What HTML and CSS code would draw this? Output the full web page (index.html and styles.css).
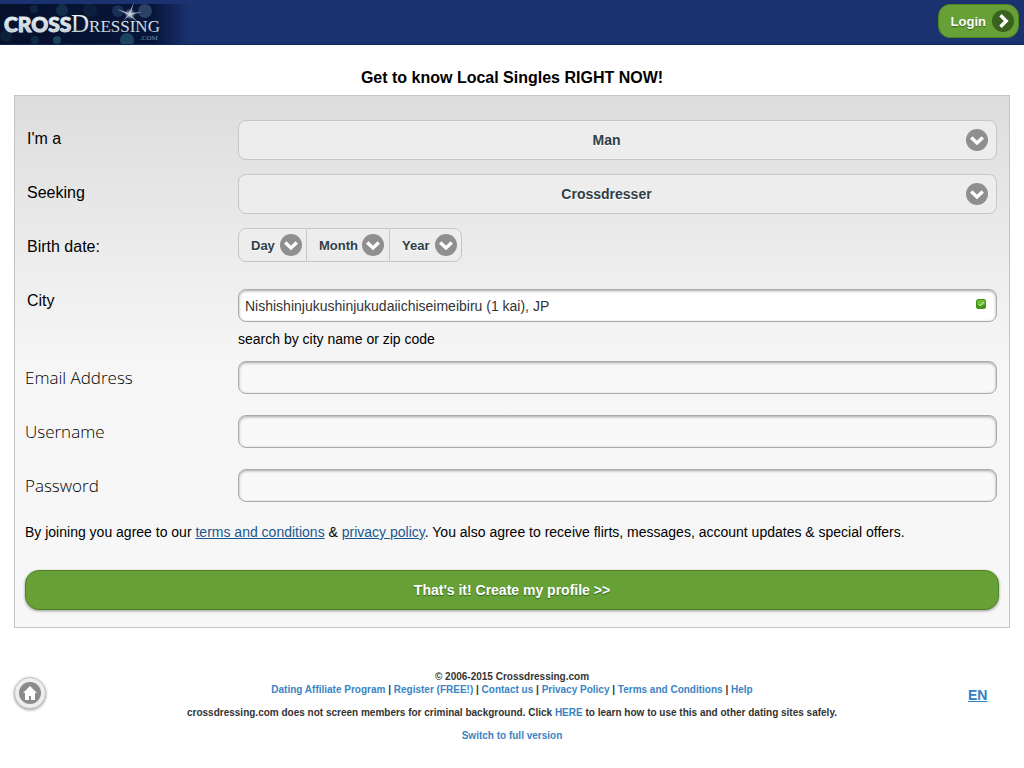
FILE: index.html
```html
<!DOCTYPE html>
<html lang="en">
<head>
<meta charset="utf-8">
<meta name="viewport" content="width=device-width, initial-scale=1">
<title>Crossdressing.com</title>
<link rel="stylesheet" href="styles.css">
</head>
<body>
<svg class="sprite" aria-hidden="true">
  <symbol id="chevron" viewBox="0 0 22 22"><circle cx="11" cy="11" r="11" fill="#8f8f8f"/><path d="M5.200 8.500l5.800 5.500 5.800-5.500" fill="none" stroke="#fff" stroke-width="3.4"/></symbol>
</svg>
<header class="topbar">
  <a class="logo" href="#" aria-label="Crossdressing.com">
    <svg width="190" height="44" viewBox="0 0 190 44">
      <defs>
        <linearGradient id="night" x1="0" x2="1"><stop offset="0" stop-color="#07112c"/><stop offset=".8" stop-color="#07153a"/><stop offset=".92" stop-color="#13265b"/><stop offset="1" stop-color="#1a3370"/></linearGradient>
        <linearGradient id="silver" x1="0" y1="0" x2="0" y2="1"><stop offset="0" stop-color="#fff"/><stop offset="1" stop-color="#b3c4cc"/></linearGradient>
        <radialGradient id="glow"><stop offset="0" stop-color="#fff"/><stop offset=".35" stop-color="#b9c6d8" stop-opacity=".7"/><stop offset="1" stop-color="#7b91b5" stop-opacity="0"/></radialGradient>
      </defs>
      <path d="M0 4h190v40H0z" fill="url(#night)"/>
      <g fill="#28647a">
        <circle cx="62" cy="10" r="6" opacity=".35"/><circle cx="34" cy="9" r="4" opacity=".25"/><circle cx="127" cy="40" r="7" opacity=".6"/><circle cx="57" cy="40" r="4" opacity=".6"/><circle cx="35" cy="40" r="4" opacity=".3"/><circle cx="145" cy="11" r="7" fill="#4e7190" opacity=".5"/><circle cx="118" cy="11" r="6" fill="#365880" opacity=".4"/><circle cx="6" cy="36" r="6" opacity=".2"/><circle cx="90" cy="10" r="7" opacity=".15"/>
      </g>
      <circle cx="130" cy="14" r="6" fill="url(#glow)"/>
      <path d="M117 9l12 4 5-11-3 11 11-1-11 3 7 7-9-6-6 5 5-6z" fill="#c3ccd9" opacity=".8"/>
      <text class="logo-cross" x="4" y="32" fill="url(#silver)">CROSS</text>
      <text class="logo-dressing" x="71" y="32" fill="url(#silver)">D<tspan class="logo-caps">RESSING</tspan></text>
      <text class="logo-com" x="140" y="40" fill="#6f94ae">.COM</text>
    </svg>
  </a>
  <button class="login" type="button">Login
    <svg width="22" height="22" viewBox="0 0 22 22" aria-hidden="true"><circle cx="11" cy="11" r="11" fill="#38621e"/><path d="M8.500 5.200L14.200 11l-5.700 5.800" fill="none" stroke="#fff" stroke-width="3.4"/></svg>
  </button>
</header>
<main class="content">
  <h1 class="headline">Get to know Local Singles RIGHT NOW!</h1>
  <form class="panel">
    <div class="row">
      <label class="label" for="gender">I'm a</label>
      <div class="pick"><select id="gender"><option>Man</option><option>Woman</option></select><svg class="chev"><use href="#chevron"/></svg></div>
    </div>
    <div class="row">
      <label class="label" for="seeking">Seeking</label>
      <div class="pick"><select id="seeking"><option>Crossdresser</option><option>Man</option></select><svg class="chev"><use href="#chevron"/></svg></div>
    </div>
    <div class="row row-date" role="group" aria-labelledby="birth">
      <span class="label" id="birth">Birth date:</span>
      <div class="date">
        <div class="pick mini"><select aria-label="Day"><option>Day</option></select><svg class="chev"><use href="#chevron"/></svg></div>
        <div class="pick mini month"><select aria-label="Month"><option>Month</option></select><svg class="chev"><use href="#chevron"/></svg></div>
        <div class="pick mini"><select aria-label="Year"><option>Year</option></select><svg class="chev"><use href="#chevron"/></svg></div>
      </div>
    </div>
    <div class="row row-city">
      <label class="label" for="city">City</label>
      <div class="city">
        <input class="field filled" id="city" type="text" value="Nishishinjukushinjukudaiichiseimeibiru (1 kai), JP">
        <svg class="valid" viewBox="0 0 10 10" aria-hidden="true"><rect width="10" height="10" rx="2.500" fill="#419516"/><rect x="1" y="1" width="8" height="5" rx="2" fill="#71bd38"/><path d="M2.500 5.200l1.800 1.800 3.400-4" fill="none" stroke="#e9f7d8"/></svg>
        <p class="hint">search by city name or zip code</p>
      </div>
    </div>
    <div class="row row-text"><label class="label light" for="email">Email Address</label><input class="field" id="email" type="email"></div>
    <div class="row row-text"><label class="label light" for="username">Username</label><input class="field" id="username" type="text"></div>
    <div class="row row-text"><label class="label light" for="password">Password</label><input class="field" id="password" type="password"></div>
    <p class="terms">By joining you agree to our <a href="#">terms and conditions</a> &amp; <a href="#">privacy policy</a>. You also agree to receive flirts, messages, account updates &amp; special offers.</p>
    <button class="submit" type="submit">That's it! Create my profile &gt;&gt;</button>
  </form>
</main>
<footer class="footer">
  <a class="home" href="#" aria-label="Home"><svg width="22" height="22" viewBox="0 0 22 22"><circle cx="11" cy="11" r="11" fill="#8b8b8b"/><path d="M11 4l7 7h-2v7h-4v-4h-2v4H6v-7H4z" fill="#fff"/></svg></a>
  <div class="legal">
    <p>© 2006-2015 Crossdressing.com<br><a href="#">Dating Affiliate Program</a> | <a href="#">Register (FREE!)</a> | <a href="#">Contact us</a> | <a href="#">Privacy Policy</a> | <a href="#">Terms and Conditions</a> | <a href="#">Help</a></p>
    <p>crossdressing.com does not screen members for criminal background. Click <a href="#">HERE</a> to learn how to use this and other dating sites safely.</p>
    <p><a href="#">Switch to full version</a></p>
  </div>
  <a class="lang" href="#">EN</a>
</footer>
</body>
</html>
```
FILE: styles.css
```css
* { box-sizing: border-box; }
body { margin: 0; background: #fff; color: #000; font-family: "Liberation Sans", Arial, sans-serif; font-size: 16px; }
p, h1 { margin: 0; }
.sprite { display: none; }
button, input, select { font-family: inherit; margin: 0; }

.topbar { display: flex; justify-content: space-between; align-items: flex-start; height: 45px; padding-right: 5px; background: #1a3370; border-bottom: 1px solid #142759; }
.logo, .logo svg { display: block; }
.logo-cross { font: 900 21px Lato, sans-serif; stroke: #d5dfe4; stroke-width: 1px; }
.logo-dressing { font: 25px "Liberation Serif", serif; }
.logo-caps { font-size: 17px; }
.logo-com { font: 7px "Liberation Serif", serif; }
.login { display: flex; align-items: center; gap: 6px; height: 34px; margin-top: 4px; padding: 0 4px 0 12px; border: 1px solid #50831f; border-radius: 12px; background: #66a036; color: #fff; font-size: 13px; font-weight: bold; text-shadow: 0 1px 1px #38621e; }

.content { padding: 23px 14px 0; }
.headline { height: 27px; font-size: 16px; line-height: 20px; text-align: center; }
.panel { padding: 24px 10px 17px; border: 1px solid #c4c4c4; background: linear-gradient(#dddddd, #f6f6f6 50%, #f7f7f7); }
.row { display: grid; grid-template-columns: 213px 1fr; height: 40px; margin: 0 2px 14px 0; }
.row-date { margin-bottom: 27px; height: 34px; }
.row-city { height: 58px; }
.row-text { height: 33px; margin-bottom: 21px; }
.label { padding: 9px 2px 0; line-height: 20px; }
.row-city .label { padding-top: 2px; }
.light { padding: 7px 0 0; font-family: "Open Sans", sans-serif; font-size: 17px; font-weight: 300; }

.pick { position: relative; }
.pick select { width: 100%; height: 40px; padding: 0 40px 0 18px; appearance: none; border: 1px solid #c6c6c6; border-radius: 8px; background: #ededed; color: #2f3e46; font-size: 14px; font-weight: bold; text-align-last: center; text-shadow: 0 1px 0 #fff; }
.chev { position: absolute; right: 9px; top: 9px; width: 22px; height: 22px; }
.date { display: flex; }
.pick.mini select { height: 34px; padding: 0 31px 0 12px; border-radius: 0; font-size: 13px; text-align-last: left; }
.pick.mini .chev { top: 6px; right: 5px; }
.pick.mini:first-child select { border-radius: 8px 0 0 8px; }
.pick.mini:last-child select { border-radius: 0 8px 8px 0; }
.pick.mini.month select { border-right: 0; border-left: 0; }

.field { width: 100%; height: 33px; padding: 0 6px; border: 1px solid #aaa; border-radius: 8px; background: #f9f9f9; box-shadow: inset 0 1px 3px rgba(0, 0, 0, .35); color: #333; font-size: 14px; }
.filled { background: #fff; }
.city { position: relative; }
.valid { position: absolute; top: 10px; right: 11px; width: 10px; height: 10px; }
.hint { margin-top: 8px; font-size: 14px; line-height: 18px; }
.terms { margin-bottom: 28px; font-size: 14px; line-height: 19px; }
.terms a { color: #1b568f; }
.submit { display: block; width: 100%; height: 40px; border: 1px solid #50831f; border-radius: 14px; background: #66a036; box-shadow: 0 1px 3px rgba(0, 0, 0, .4); color: #fff; font-size: 14px; font-weight: bold; text-shadow: 0 1px 1px #38621e; }

.footer { display: flex; justify-content: space-between; align-items: flex-start; padding: 42px 14px 20px; color: #333; font-weight: bold; }
.home { display: flex; align-items: center; justify-content: center; width: 32px; height: 32px; margin-top: 7px; border: 1px solid #c4c4c4; border-radius: 50%; background: #eee; box-shadow: 0 1px 3px rgba(0, 0, 0, .4); }
.legal { flex: 1; font-size: 10px; line-height: 13px; text-align: center; }
.legal p { margin-bottom: 10px; }
.legal a { color: #3a84c3; text-decoration: none; }
.lang { width: 32px; margin: 16px 10px 0 -10px; color: #2f82c6; font-size: 14px; line-height: 18px; }
```
